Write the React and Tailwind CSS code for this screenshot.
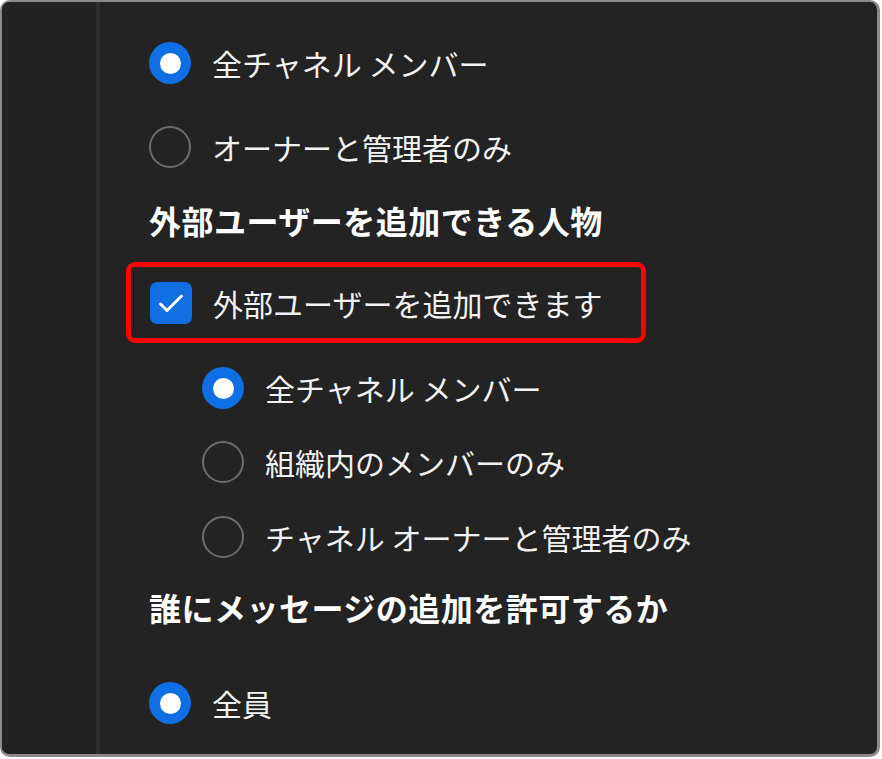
const font = { fontFamily: '"Noto Sans CJK JP", "Noto Sans", sans-serif' }

function Radio({ checked }) {
  if (checked) {
    return (
      <span className="flex h-[42px] w-[42px] shrink-0 items-center justify-center rounded-full bg-[#0f6fe3]">
        <span className="h-[21px] w-[21px] rounded-full bg-white" />
      </span>
    )
  }
  return <span className="h-[42px] w-[42px] shrink-0 rounded-full border-2 border-[#6c6c6c]" />
}

function Checkbox() {
  return (
    <span className="flex h-[42px] w-[42px] shrink-0 items-center justify-center rounded-[7px] bg-[#0f6fe3]">
      <svg width="28" height="28" viewBox="0 0 28 28" fill="none">
        <path d="M3.5 15l6.5 6.5L24.5 7" stroke="white" strokeWidth="3" strokeLinecap="round" strokeLinejoin="round" />
      </svg>
    </span>
  )
}

function Option({ checked, label, height }) {
  return (
    <div className={`flex shrink-0 items-center gap-[21px] ${height}`}>
      <Radio checked={checked} />
      <span className="text-[30px] leading-none text-[#f2f2f2]">{label}</span>
    </div>
  )
}

function Heading({ children, height }) {
  return (
    <div className={`flex shrink-0 items-center ${height}`}>
      <span className="text-[32px] font-bold leading-none tracking-[0.5px] text-white">{children}</span>
    </div>
  )
}

export default function App() {
  return (
    <div className="h-[759px] w-[882px] bg-white" style={font}>
      <div className="flex h-[757px] w-[880px] overflow-hidden rounded-[10px] border-t-2 border-l-2 border-r-[3px] border-b-[3px] border-[#8a8a8a] bg-[#232323]">
        <div className="w-[94px] shrink-0 bg-[#222222]" />
        <div className="w-[4px] shrink-0 bg-[#2c2e35]" />
        <div className="flex min-h-0 flex-1 flex-col pt-[19px]">
          <div className="flex shrink-0 flex-col pl-[49px]">
            <Option checked label="全チャネル メンバー" height="h-[84px]" />
            <Option label="オーナーと管理者のみ" height="h-[84px]" />
            <Heading height="h-[62px]">外部ユーザーを追加できる人物</Heading>
          </div>

          <div className="ml-[26px] mt-[11px] flex h-[81px] w-[520px] shrink-0 items-center gap-[21px] rounded-[9px] border-[5px] border-[#ff0000] pl-[19px]">
            <Checkbox />
            <span className="text-[30px] leading-none text-[#f2f2f2]">外部ユーザーを追加できます</span>
          </div>

          <div className="mt-[8px] flex shrink-0 flex-col pl-[102px]">
            <Option checked label="全チャネル メンバー" height="h-[74px]" />
            <Option label="組織内のメンバーのみ" height="h-[74px]" />
            <Option label="チャネル オーナーと管理者のみ" height="h-[75px]" />
          </div>

          <div className="flex shrink-0 flex-col pl-[49px]">
            <Heading height="h-[66px]">誰にメッセージの追加を許可するか</Heading>
            <Option checked label="全員" height="h-[126px]" />
          </div>
        </div>
      </div>
    </div>
  )
}
